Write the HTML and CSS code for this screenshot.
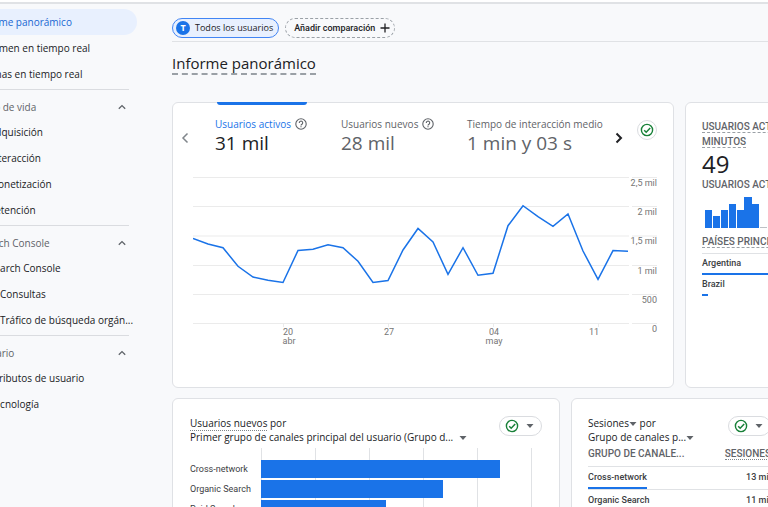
FILE: index.html
```html
<!DOCTYPE html>
<html lang="es">
<head>
	<meta charset="UTF-8">
	<meta name="viewport" content="width=device-width">
	<title>Informe panorámico</title>
	<link rel="stylesheet" href="styles.css">
</head>
<body>

<!-- shared icons -->
<svg class="sprite" aria-hidden="true">
	<symbol id="up" viewBox="0 0 10 10"><path d="M1.8 6.8 5 3.6l3.2 3.2" fill="none" stroke="currentColor" stroke-width="1.3"/></symbol>
	<symbol id="help" viewBox="0 0 12 12"><circle cx="6" cy="6" r="5.2" fill="none" stroke="currentColor" stroke-width="1.1"/><path d="M4.3 4.9a1.7 1.7 0 1 1 2.7 1.3C6.3 6.7 6 6.9 6 7.5" fill="none" stroke="currentColor" stroke-width="1.1"/><path d="M5.4 8.2h1.2v1.1H5.4z" fill="currentColor"/></symbol>
	<symbol id="check" viewBox="0 0 14 14"><circle cx="7" cy="7" r="5.6" fill="none" stroke="currentColor" stroke-width="1.4"/><path d="M4.2 7.2l2 2 4-4.2" fill="none" stroke="currentColor" stroke-width="1.5"/></symbol>
	<symbol id="down" viewBox="0 0 8 4"><path d="M0.5 0h7L4 4z" fill="currentColor"/></symbol>
</svg>

<div class="app">

<nav class="sidebar">
	<a class="item active" href="#">Informe panorámico</a>
	<a class="item" href="#">Resumen en tiempo real</a>
	<a class="item" href="#">Páginas en tiempo real</a>

	<section class="group">
		<button class="group-head" type="button">Ciclo de vida <svg class="up"><use href="#up"/></svg></button>
		<a class="item sub" href="#">Adquisición</a>
		<a class="item sub" href="#">Interacción</a>
		<a class="item sub" href="#">Monetización</a>
		<a class="item sub" href="#">Retención</a>
	</section>

	<section class="group">
		<button class="group-head" type="button">Search Console <svg class="up"><use href="#up"/></svg></button>
		<a class="item sub" href="#">Search Console</a>
		<a class="item leaf" href="#">Consultas</a>
		<a class="item leaf" href="#">Tráfico de búsqueda orgán...</a>
	</section>

	<section class="group">
		<button class="group-head" type="button">Usuario <svg class="up"><use href="#up"/></svg></button>
		<a class="item sub" href="#">Atributos de usuario</a>
		<a class="item sub" href="#">Tecnología</a>
	</section>
</nav>

<main class="main">
	<div class="compare">
		<button class="chip" type="button"><span class="chip-letter">T</span>Todos los usuarios</button>
		<button class="chip chip-add" type="button">Añadir comparación
			<svg class="plus" viewBox="0 0 10 10"><path d="M5 0.5v9M0.5 5h9" stroke="currentColor" stroke-width="1.3"/></svg>
		</button>
	</div>

	<h1 class="title"><span>Informe panorámico</span></h1>

	<div class="row row-top">
		<section class="card overview">
			<div class="metrics">
				<button class="arrow prev" type="button" aria-label="Anterior"><svg viewBox="0 0 8 12"><path d="M6.5 1.5 2 6l4.5 4.5" fill="none" stroke="currentColor" stroke-width="1.5"/></svg></button>
				<button class="metric selected" type="button">
					<span class="metric-name">Usuarios activos <svg class="help"><use href="#help"/></svg></span>
					<span class="metric-value">31 mil</span>
				</button>
				<button class="metric" type="button">
					<span class="metric-name">Usuarios nuevos <svg class="help"><use href="#help"/></svg></span>
					<span class="metric-value">28 mil</span>
				</button>
				<button class="metric" type="button">
					<span class="metric-name">Tiempo de interacción medio</span>
					<span class="metric-value">1 min y 03 s</span>
				</button>
				<button class="arrow next" type="button" aria-label="Siguiente"><svg viewBox="0 0 8 12"><path d="M1.5 1.5 6 6l-4.5 4.5" fill="none" stroke="currentColor" stroke-width="2"/></svg></button>
				<button class="status round" type="button" aria-label="Calidad de los datos"><svg class="check"><use href="#check"/></svg></button>
			</div>
			<svg class="line-chart" viewBox="0 0 465 180">
				<path class="grid" d="M0 7.5h436M439 7.5h25M0 36.5h436M439 36.5h25M0 66h436M439 66h25M0 95.5h436M439 95.5h25M0 124.5h436M439 124.5h25M0 153.5h436M439 153.5h25M90.5 154v3M195.5 154v3M300.5 154v3M405.5 154v3"/>
				<polyline class="line" points="0,68.5 15,74 30,77.7 45,96.3 60,107 75,110.3 90,112.5 105,80.5 120,79.2 135,74.7 150,77.7 165,91.3 180,112.5 195,110.5 210,80 225,58.5 240,72 255,104.3 270,77.7 285,105.3 300,103.3 315,55.7 330,35.7 345,46.7 360,56.3 375,44 390,81 405,109.3 420,80.6 435,81.2"/>
				<g class="y-axis">
					<text x="464" y="16">2,5 mil</text>
					<text x="464" y="45">2 mil</text>
					<text x="464" y="74">1,5 mil</text>
					<text x="464" y="104">1 mil</text>
					<text x="464" y="133">500</text>
					<text x="464" y="162">0</text>
				</g>
				<g class="x-axis">
					<text x="95" y="165">20</text><text x="96" y="174">abr</text>
					<text x="196" y="165">27</text>
					<text x="301" y="165">04</text><text x="301" y="174">may</text>
					<text x="401" y="165">11</text>
				</g>
			</svg>
		</section>

		<section class="card realtime">
			<h2 class="caps"><span class="dashed">Usuarios activos en los últimos 30 minutos</span></h2>
			<div class="big">49</div>
			<h3 class="caps">Usuarios activos por minuto</h3>
			<svg class="minutes" viewBox="0 0 200 32">
				<path d="M3 14h7v18H3zM11 20h7v12h-7zM19 14h7v18h-7zM27 8h7v24h-7zM35 14h7v18h-7zM42 1h8v31h-8zM50 8h7v24h-7z"/>
				<path class="empty" d="M58 31h7v1h-7zM66 31h7v1h-7z"/>
			</svg>
			<h3 class="caps"><span class="dashed">Países principales</span></h3>
			<ul class="country-list">
				<li>Argentina<span class="meter" style="width: 100%"></span></li>
				<li>Brazil<span class="meter" style="width: 3%"></span></li>
			</ul>
		</section>
	</div>

	<div class="row row-bottom">
		<section class="card channels">
			<header class="card-head">
				<div class="card-title">
					<div><span class="dotted">Usuarios nuevos</span> por</div>
					<button class="dimension" type="button">Primer grupo de canales principal del usuario (Grupo d... <svg class="down gap"><use href="#down"/></svg></button>
				</div>
				<button class="status" type="button" aria-label="Calidad de los datos"><svg class="check"><use href="#check"/></svg><svg class="down"><use href="#down"/></svg></button>
			</header>
			<div class="bar-chart">
				<ul class="bar-labels">
					<li>Cross-network</li>
					<li>Organic Search</li>
					<li>Paid Search</li>
				</ul>
				<div class="plot">
					<div class="bar" style="width: 88%"></div>
					<div class="bar" style="width: 67%"></div>
					<div class="bar" style="width: 46%"></div>
				</div>
			</div>
		</section>

		<section class="card sessions">
			<header class="card-head">
				<div class="card-title">
					<div><button class="dimension" type="button">Sesiones<svg class="down"><use href="#down"/></svg></button> por</div>
					<button class="dimension" type="button">Grupo de canales p...<svg class="down"><use href="#down"/></svg></button>
				</div>
				<button class="status" type="button" aria-label="Calidad de los datos"><svg class="check"><use href="#check"/></svg><svg class="down"><use href="#down"/></svg></button>
			</header>
			<table class="data">
				<thead>
					<tr><th class="caps">Grupo de canale...</th><th class="caps"><span class="dotted">Sesiones</span></th></tr>
				</thead>
				<tbody>
					<tr><td>Cross-network<span class="meter" style="width: 48%"></span></td><td>13 mil</td></tr>
					<tr><td>Organic Search<span class="meter" style="width: 40%"></span></td><td>11 mil</td></tr>
				</tbody>
			</table>
		</section>
	</div>
</main>

</div>

</body>
</html>
```
FILE: styles.css
```css
* { box-sizing: border-box; }

body {
	margin: 0;
	background: #f8f9fb;
	color: #202124;
	font-family: "Open Sans", "Noto Sans", sans-serif;
	font-size: 10px;
	line-height: 14px;
}

h1, h2, h3, ul { margin: 0; padding: 0; font-weight: normal; }
ul { list-style: none; }
a { color: inherit; text-decoration: none; }

button {
	padding: 0;
	border: 0;
	background: none;
	color: inherit;
	font: inherit;
	text-align: left;
	cursor: pointer;
}

.sprite { position: absolute; width: 0; height: 0; }

.app {
	display: flex;
	gap: 35px;
	height: 100vh;
	padding-top: 2px;
	overflow: hidden;
	background: linear-gradient(#fff 2px, #e0e2e5 2px, #e0e2e5 4px, #f8f9fb 4px);
}

/* sidebar, scrolled a little to the left */
.sidebar {
	flex: none;
	width: 178px;
	margin-left: -41px;
	padding-top: 7px;
	font-weight: 500;
}

.item {
	display: block;
	height: 26px;
	padding-left: 17px;
	line-height: 26px;
	white-space: nowrap;
}
.item.active { border-radius: 0 13px 13px 0; background: #e8f0fe; color: #1967d2; }
.item.sub { padding-left: 30px; }
.item.leaf { padding-left: 41px; }

.group { margin-top: 2px; }
.group-head {
	display: flex;
	align-items: center;
	justify-content: space-between;
	width: 170px;
	height: 30px;
	padding: 4px 2px 0 19px;
	border-top: 1px solid #dadce0;
	color: #5f6368;
}
.up { width: 10px; height: 10px; }

.main { flex: 1; min-width: 0; padding-top: 16px; }

.compare {
	display: flex;
	gap: 6px;
	padding-bottom: 3px;
	border-bottom: 1px solid #e0e2e5;
}
.chip {
	display: flex;
	align-items: center;
	gap: 5px;
	height: 20px;
	padding: 0 5px 0 3px;
	border: 1px solid #4285f4;
	border-radius: 10px;
	background: #e8f0fe;
	font-size: 9px;
	font-weight: 500;
}
.chip-letter {
	width: 14px;
	border-radius: 50%;
	background: #1a73e8;
	color: #fff;
	font-weight: 700;
	text-align: center;
}
.chip-add {
	padding: 0 4px 0 8px;
	border: 1px dashed #9aa0a6;
	background: none;
	font-family: Roboto, sans-serif;
}
.plus { width: 10px; height: 10px; }

.title { margin: 10px 0 27px; font-size: 15px; line-height: 22px; }
.title span { display: inline-block; height: 23px; border-bottom: 2px dashed #9aa0a6; }

/* rows keep their minimum widths and run past a narrow window */
.row { display: grid; gap: 11px; margin-bottom: 10px; }
.row-top { grid-template-columns: minmax(502px, 2fr) minmax(244px, 1fr); }
.row-bottom { grid-template-columns: minmax(388px, 1fr) minmax(218px, 1fr); }

.card {
	padding: 17px;
	border: 1px solid #dfe1e5;
	border-radius: 6px;
	background: #fff;
}

/* overview card */
.overview { padding: 0 15px 37px 20px; }
.metrics { display: flex; height: 67px; }
.metric {
	position: relative;
	display: flex;
	flex-direction: column;
	width: 126px;
	padding-top: 14px;
	color: #5f6368;
	white-space: nowrap;
}
.metric.selected { color: #202124; }
.metric.selected::before {
	content: "";
	position: absolute;
	top: -1px;
	left: 2px;
	width: 90px;
	height: 3px;
	border-radius: 0 0 3px 3px;
	background: #1a73e8;
}
.metric.selected .metric-name { color: #1a73e8; }
.metric-name { display: flex; align-items: center; gap: 4px; font-weight: 500; }
.metric-value { font-size: 19px; line-height: 24px; }
.help { width: 12px; height: 12px; color: #5f6368; }
.arrow { width: 22px; height: 12px; margin-top: 29px; }
.arrow svg { display: block; width: 8px; height: 12px; }
.prev { margin-left: -12px; width: 34px; color: #80868b; }
.next { margin-left: 22px; }

.status {
	display: flex;
	flex: none;
	align-items: center;
	justify-content: space-between;
	width: 43px;
	height: 20px;
	padding: 0 7px 0 5px;
	border: 1px solid #dadce0;
	border-radius: 10px;
	color: #5f6368;
}
.status.round { width: 20px; margin: 17px 1px 0 auto; padding: 0 2px; }
.check { width: 14px; height: 14px; color: #188038; }
.down { width: 8px; height: 4px; }

.line-chart { display: block; width: 100%; }
.line-chart text { font-family: Roboto, sans-serif; font-size: 9px; fill: #757575; }
.grid { fill: none; stroke: #ebebeb; }
.line { fill: none; stroke: #1a73e8; stroke-width: 1.5; }
.y-axis { text-anchor: end; }
.x-axis { text-anchor: middle; }

.caps {
	color: #5f6368;
	font-family: Roboto, sans-serif;
	font-size: 10px;
	font-weight: 500;
	line-height: 15px;
	text-transform: uppercase;
}
.dashed { border-bottom: 1px dashed #9aa0a6; }
.dotted { border-bottom: 1px dotted #80868b; }

/* realtime card */
.realtime { padding: 16px 34px 16px 16px; }
.big { padding-top: 2px; font-size: 24px; line-height: 26px; }
.minutes { display: block; width: 200px; height: 32px; margin: 4px 0 6px; fill: #1a73e8; }
.minutes .empty { fill: #bdc1c6; }
.country-list { margin-top: 4px; border-top: 1px solid #e0e2e5; }
.country-list li {
	padding-top: 2px;
	font-family: Roboto, sans-serif;
	font-size: 9px;
	font-weight: 500;
	color: #3c4043;
}
.meter { display: block; height: 2px; margin-top: 3px; background: #1a73e8; }

/* bottom cards */
.card-head { display: flex; align-items: flex-start; justify-content: space-between; }
.card-title { flex: 1; width: 0; font-weight: 500; white-space: nowrap; }
.dimension .down { vertical-align: middle; color: #5f6368; }
.dimension .gap { margin-left: 3px; }

.bar-chart {
	display: grid;
	grid-template-columns: 71px 1fr;
	margin: 4px 9px 0 0;
	color: #3c4043;
	font-family: Roboto, sans-serif;
	font-size: 9px;
	font-weight: 500;
}
.bar-labels { padding-top: 11px; line-height: 20px; }
.plot {
	padding-top: 12px;
	background: repeating-linear-gradient(90deg, #e0e2e5 0 1px, transparent 1px 54px);
}
.bar { height: 18px; margin-bottom: 2px; background: #1a73e8; }

.sessions { padding-left: 16px; }
.data { width: 100%; margin-top: 2px; border-collapse: collapse; font-family: Roboto, sans-serif; font-size: 9px; }
.data th { padding: 0 0 5px; border-bottom: 1px solid #e0e2e5; text-align: left; }
.data td { padding: 3px 0 0; border-bottom: 1px solid #e0e2e5; color: #3c4043; font-weight: 500; vertical-align: top; }
.data td:last-child, .data th:last-child { text-align: right; }
```
